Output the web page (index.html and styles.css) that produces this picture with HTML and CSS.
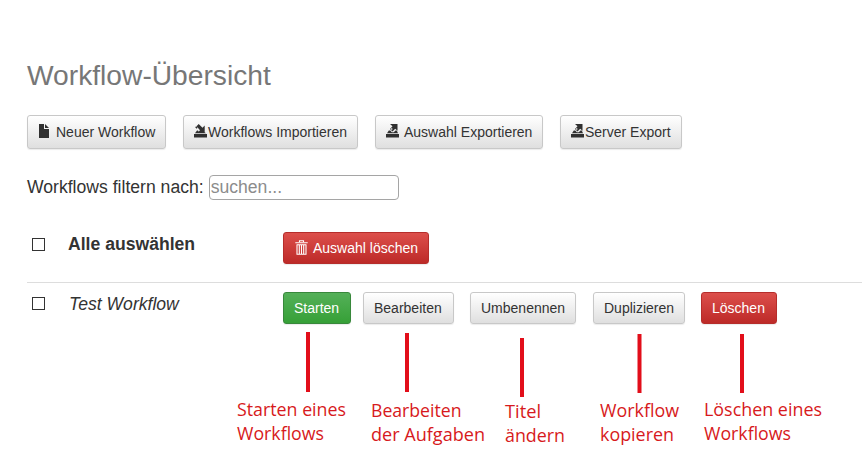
FILE: index.html
```html
<!DOCTYPE html>
<html lang="de">
<head>
<meta charset="utf-8">
<title>Workflow-Übersicht</title>
<link rel="stylesheet" href="styles.css">
</head>
<body>
<main class="page">
  <h1 class="title">Workflow-Übersicht</h1>
  <div class="toolbar">
    <button class="btn w-new"><svg class="icon" viewBox="0 0 13 14"><path d="M1 0h5v5h5v9H1zM7 0l4 4H7z"/></svg><span class="gap">Neuer Workflow</span></button>
    <button class="btn w-import"><svg class="icon" viewBox="0 0 13 14"><path d="M0 10h13v3.500H0zM1 9.300L3 6.500h1L5 8.500h6l1 .8zM2.500 2.200L4.700 0l3.800 3.800L10.700 1.600V8.500H3.800L6 6.300z"/><path d="M1.200 3.200l.9-.9 1.500 1.500-.9.9z"/></svg><span>Workflows Importieren</span></button>
    <button class="btn w-export"><svg class="icon" viewBox="0 0 13 14"><path d="M0 10h13v3.500H0zM1 9.300L2.800 6.500h1.500l1.500 1.700h2L9.500 6.500h1.300L12 9.300zM4 0h7.500v6.800L9.200 4.800 6.500 7.500 4 5l2.500-2.700z"/><path class="cut" d="M4.800 5l.9-.9 1 1-.9.9z"/></svg><span class="gap">Auswahl Exportieren</span></button>
    <button class="btn w-server"><svg class="icon" viewBox="0 0 13 14"><path d="M0 10h13v3.500H0zM1 9.300L2.800 6.500h1.500l1.500 1.700h2L9.500 6.500h1.300L12 9.300zM4 0h7.500v6.800L9.200 4.800 6.500 7.500 4 5l2.500-2.700z"/><path class="cut" d="M4.800 5l.9-.9 1 1-.9.9z"/></svg><span class="gap-xs">Server Export</span></button>
  </div>
  <label class="filter"><span>Workflows filtern nach:</span><input class="search" type="text" placeholder="suchen..."></label>
  <section class="list">
    <div class="row head">
      <input class="check" type="checkbox" aria-label="Alle auswählen">
      <strong class="name">Alle auswählen</strong>
      <button class="btn small danger w-delall"><svg class="icon trash" viewBox="0 0 13 15"><path d="M4.500 2V.7h4V2M.3 2.700h12.400M1.700 4.700h9.600M2 4.500V14.300h9V4.500M4.300 5v9M6.500 5v9M8.700 5v9"/></svg><span class="gap-s">Auswahl löschen</span></button>
    </div>
    <div class="row item">
      <input class="check" type="checkbox" aria-label="Test Workflow">
      <em class="name">Test Workflow</em>
      <div class="actions">
        <button class="btn small success">Starten</button>
        <button class="btn small">Bearbeiten</button>
        <button class="btn small snug">Umbenennen</button>
        <button class="btn small snug">Duplizieren</button>
        <button class="btn small danger">Löschen</button>
      </div>
    </div>
  </section>
</main>
<svg class="notes" width="862" height="463" viewBox="0 0 862 463">
  <g class="pointers">
    <rect x="306" y="332" width="4" height="60"/>
    <rect x="405" y="333" width="4" height="59"/>
    <rect x="520" y="338" width="4" height="59"/>
    <rect x="637.500" y="334" width="4" height="59"/>
    <rect x="740" y="334" width="4" height="59"/>
  </g>
  <g>
    <text x="237" y="416" textLength="109" lengthAdjust="spacingAndGlyphs">Starten eines</text>
    <text x="237" y="439.500" textLength="87" lengthAdjust="spacingAndGlyphs">Workflows</text>
    <text x="371" y="417" textLength="90.500" lengthAdjust="spacingAndGlyphs">Bearbeiten</text>
    <text x="371" y="441" textLength="114" lengthAdjust="spacingAndGlyphs">der Aufgaben</text>
    <text x="505" y="418" textLength="36" lengthAdjust="spacingAndGlyphs">Titel</text>
    <text x="505" y="441.500" textLength="60" lengthAdjust="spacingAndGlyphs">ändern</text>
    <text x="600" y="417" textLength="79" lengthAdjust="spacingAndGlyphs">Workflow</text>
    <text x="600" y="441" textLength="74" lengthAdjust="spacingAndGlyphs">kopieren</text>
    <text x="704" y="416" textLength="118" lengthAdjust="spacingAndGlyphs">Löschen eines</text>
    <text x="704" y="439.500" textLength="87" lengthAdjust="spacingAndGlyphs">Workflows</text>
  </g>
</svg>
</body>
</html>
```
FILE: styles.css
```css
* { box-sizing: border-box; }
body {
  margin: 0;
  width: 862px;
  height: 463px;
  overflow: hidden;
  background: #fff;
  color: #333;
  font-family: "Liberation Sans", Arial, sans-serif;
}
.page { padding: 59px 0 0 27px; }
.title {
  margin: 0;
  height: 56px;
  font-size: 28.2px;
  font-weight: 400;
  line-height: 32px;
  color: #777;
}
.toolbar { display: flex; gap: 17px; }
.btn {
  display: inline-flex;
  align-items: center;
  justify-content: flex-start;
  height: 34px;
  padding: 0 10px;
  border: 1px solid #c8c8c8;
  border-radius: 3px;
  background: linear-gradient(#fff, #dfdfdf);
  box-shadow: 0 1px 1px rgba(0, 0, 0, .08);
  color: #333;
  font: 14px/20px "Liberation Sans", Arial, sans-serif;
  white-space: nowrap;
}
.w-new { width: 139px; }
.w-import { width: 175px; }
.w-import span { margin-left: 1px; }
.w-export { width: 168px; }
.w-server { width: 122px; }
.w-delall { width: 146px; }
.btn.small { height: 32px; }
.btn.danger {
  border-color: #b62d2b;
  background: linear-gradient(#dc4f4b, #bd2a28);
  color: #fff;
}
.btn.success {
  border-color: #38883b;
  background: linear-gradient(#54b058, #36a037);
  color: #fff;
}
.icon {
  flex: none;
  width: 13px;
  height: 14px;
  margin-bottom: 2px;
  fill: #303030;
}
.icon .cut { fill: #f8f8f8; }
.icon.trash {
  height: 15px;
  margin-left: 1px;
  fill: none;
  stroke: #fff;
  stroke-width: 1.1;
}
.gap { margin-left: 5px; }
.gap-s { margin-left: 5px; }
.gap-xs { margin-left: 1px; }
.filter {
  display: flex;
  align-items: center;
  gap: 5px;
  height: 25px;
  margin-top: 26px;
  font-size: 17.6px;
}
.search {
  width: 190px;
  height: 25px;
  padding: 0 1px;
  border: 1px solid #a5a5a5;
  border-radius: 4px;
  font: 17.6px "Liberation Sans", Arial, sans-serif;
}
.search::placeholder { color: #8c8c8c; opacity: 1; }
.row {
  display: grid;
  grid-template-columns: 41px 215px 1fr;
  align-items: start;
}
.head { height: 82px; padding-top: 32px; }
.item { padding-top: 9px; border-top: 1px solid #ddd; }
.check {
  appearance: none;
  width: 13px;
  height: 13px;
  margin: 6px 0 0 5px;
  border: 1px solid #333;
  background: #fff;
}
.item .check { margin-top: 5px; }
.name { font-size: 17.6px; line-height: 25px; }
.item .name { padding-left: 1px; line-height: 24px; }
.actions {
  display: grid;
  grid-template-columns: 80px 107px 123px 108px 76px;
  justify-items: start;
}
.actions .btn { padding-right: 11px; }
.actions .snug { padding-right: 10px; }
.notes {
  position: absolute;
  left: 0;
  top: 0;
  pointer-events: none;
  font: 17.8px "Open Sans", "Noto Sans", sans-serif;
  fill: #d71920;
}
.pointers { fill: #e20e1a; }
```
